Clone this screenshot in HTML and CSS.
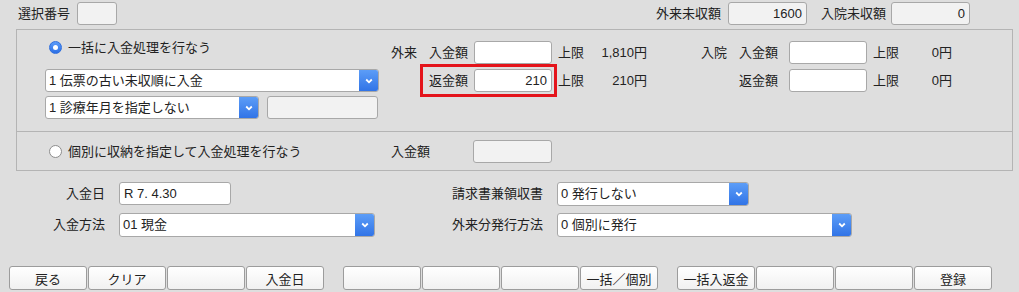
FILE: index.html
```html
<!DOCTYPE html>
<html lang="ja">
  <head>
    <meta charset="UTF-8" />
    <meta name="viewport" content="width=device-width, initial-scale=1.0" />
    <title>入金処理</title>
    <link rel="stylesheet" href="styles.css">
  </head>
  <body>
    <div class="topbar">
      <span class="label">選択番号</span>
      <span class="field readonly field-no"></span>
      <span class="label label-gairai">外来未収額</span>
      <span class="field readonly field-due num">1600</span>
      <span class="label label-nyuin">入院未収額</span>
      <span class="field readonly field-due num">0</span>
    </div>

    <div class="panel">
      <div class="bulk">
        <div class="method">
          <div class="radio"><span class="dot on"></span>一括に入金処理を行なう</div>
          <div class="select select-order">
            <span class="select-text">1 伝票の古い未収順に入金</span>
            <span class="arrow"><svg width="8" height="6" viewBox="0 0 8 6"><path d="M1.2 1.5 L4 4.3 L6.8 1.5" fill="none" stroke="#fff" stroke-width="1.8"/></svg></span>
          </div>
          <div class="method-row">
            <div class="select select-month">
              <span class="select-text">1 診療年月を指定しない</span>
              <span class="arrow"><svg width="8" height="6" viewBox="0 0 8 6"><path d="M1.2 1.5 L4 4.3 L6.8 1.5" fill="none" stroke="#fff" stroke-width="1.8"/></svg></span>
            </div>
            <span class="field readonly field-month"></span>
          </div>
        </div>

        <div class="fee">
          <span class="fee-kind">外来</span>
          <span class="fee-label">入金額</span>
          <span class="field fee-input"></span>
          <span class="fee-limit">上限</span>
          <span class="fee-value">1,810円</span>

          <span></span>
          <span class="fee-label">返金額</span>
          <span class="field fee-input num">210</span>
          <span class="fee-limit">上限</span>
          <span class="fee-value">210円</span>
          <div class="mark"></div>
        </div>

        <div class="fee fee-nyuin">
          <span class="fee-kind">入院</span>
          <span class="fee-label">入金額</span>
          <span class="field fee-input"></span>
          <span class="fee-limit">上限</span>
          <span class="fee-value">0円</span>

          <span></span>
          <span class="fee-label">返金額</span>
          <span class="field fee-input"></span>
          <span class="fee-limit">上限</span>
          <span class="fee-value">0円</span>
        </div>
      </div>

      <div class="each">
        <div class="radio radio-each"><span class="dot"></span>個別に収納を指定して入金処理を行なう</div>
        <span class="each-label">入金額</span>
        <span class="field readonly field-each"></span>
      </div>
    </div>

    <div class="form">
      <span class="form-label">入金日</span>
      <div><span class="field field-date">R 7. 4.30</span></div>
      <span class="form-label">請求書兼領収書</span>
      <div class="select select-receipt">
        <span class="select-text">0 発行しない</span>
        <span class="arrow"><svg width="8" height="6" viewBox="0 0 8 6"><path d="M1.2 1.5 L4 4.3 L6.8 1.5" fill="none" stroke="#fff" stroke-width="1.8"/></svg></span>
      </div>

      <span class="form-label">入金方法</span>
      <div class="select">
        <span class="select-text">01 現金</span>
        <span class="arrow"><svg width="8" height="6" viewBox="0 0 8 6"><path d="M1.2 1.5 L4 4.3 L6.8 1.5" fill="none" stroke="#fff" stroke-width="1.8"/></svg></span>
      </div>
      <span class="form-label">外来分発行方法</span>
      <div class="select">
        <span class="select-text">0 個別に発行</span>
        <span class="arrow"><svg width="8" height="6" viewBox="0 0 8 6"><path d="M1.2 1.5 L4 4.3 L6.8 1.5" fill="none" stroke="#fff" stroke-width="1.8"/></svg></span>
      </div>
    </div>

    <div class="buttons">
      <div class="btn-group">
        <button>戻る</button>
        <button>クリア</button>
        <button></button>
        <button>入金日</button>
      </div>
      <div class="btn-group">
        <button></button>
        <button></button>
        <button></button>
        <button>一括／個別</button>
      </div>
      <div class="btn-group">
        <button>一括入返金</button>
        <button></button>
        <button></button>
        <button>登録</button>
      </div>
    </div>
  </body>
</html>
```

FILE: styles.css
```css
/* Global */
* {
  box-sizing: border-box;
}

body {
  margin: 0;
  background: #dedede;
  color: #222;
  font-family: "Liberation Sans", "Noto Sans CJK JP", sans-serif;
  font-size: 13px;
  line-height: 23px;
}

/* Inputs */
.field {
  display: inline-block;
  height: 23px;
  line-height: 21px;
  padding: 0 4px;
  background: #fff;
  border: 1px solid #a8a8a8;
  border-radius: 3px;
  white-space: nowrap;
}

.field.readonly {
  background: #f2f2f2;
}

.num {
  text-align: right;
}

/* Top bar */
.topbar {
  display: flex;
  align-items: center;
  height: 29px;
  padding: 0 49px 2px 18px;
}

.field-no {
  width: 40px;
  margin-left: 7px;
}

.label-gairai {
  margin-left: auto;
  margin-right: 7px;
}

.label-nyuin {
  margin-left: 14px;
  margin-right: 5px;
}

.field-due {
  width: 79px;
}

/* Panel */
.panel {
  width: 997px;
  margin-left: 16px;
  border: 1px solid #b4b4b4;
}

.bulk {
  display: flex;
  height: 102px;
  padding-left: 28px;
  border-bottom: 1px solid #b4b4b4;
}

.method {
  width: 334px;
  padding-top: 6px;
}

.radio {
  display: flex;
  align-items: center;
  height: 22px;
  padding-left: 4px;
  white-space: nowrap;
}

.dot {
  width: 13px;
  height: 13px;
  margin-right: 6px;
  border: 1px solid #8d8d8d;
  border-radius: 50%;
  background: #fff;
}

.dot.on {
  position: relative;
  border-color: #2f6fde;
  background: linear-gradient(#5b9cf9, #2c6fe5);
}

.dot.on::after {
  content: "";
  position: absolute;
  top: 3px;
  left: 3px;
  width: 5px;
  height: 5px;
  border-radius: 50%;
  background: #fff;
}

/* Selects */
.select {
  display: flex;
  height: 23px;
  background: #fff;
  border: 1px solid #a8a8a8;
  border-radius: 3px;
  overflow: hidden;
}

.select-text {
  flex: 1;
  padding-left: 3px;
  line-height: 21px;
  white-space: nowrap;
}

.arrow {
  display: flex;
  align-items: center;
  justify-content: center;
  width: 20px;
  margin: -1px -1px -1px 0;
  background: linear-gradient(#5e9ff8, #2f72e6);
  border-radius: 0 3px 3px 0;
}

.select-order {
  margin-top: 11px;
}

.method-row {
  display: flex;
  margin-top: 4px;
}

.select-month {
  width: 214px;
}

.field-month {
  width: 111px;
  margin-left: 8px;
}

/* Fee groups */
.fee {
  position: relative;
  display: grid;
  grid-template-columns: 38px 45px 78px 32px 63px;
  grid-template-rows: 23px 23px;
  row-gap: 5px;
  align-self: flex-start;
  margin-left: 12px;
  margin-top: 11px;
  white-space: nowrap;
}

.fee-nyuin {
  grid-template-columns: 38px 50px 78px 31px 54px;
  margin-left: 54px;
}

.fee-limit {
  padding-left: 6px;
}

.fee-value {
  text-align: right;
}

.mark {
  position: absolute;
  grid-column: 2 / 4;
  grid-row: 2;
  top: -5px;
  bottom: -5px;
  left: -9px;
  right: -5px;
  border: 3px solid #e4141b;
}

/* Individual row */
.each {
  display: flex;
  align-items: center;
  height: 38px;
  padding-left: 28px;
}

.radio-each {
  width: 346px;
}

.each-label {
  width: 82px;
}

.field-each {
  width: 79px;
}

/* Lower form */
.form {
  display: grid;
  grid-template-columns: 105px 256px 154px 295px;
  grid-template-rows: 24px 24px;
  column-gap: 14px;
  row-gap: 7px;
  margin-top: 11px;
}

.form-label {
  text-align: right;
  line-height: 24px;
  white-space: nowrap;
}

.field-date {
  width: 112px;
}

.select-receipt {
  width: 192px;
  height: 24px;
}

.form .select {
  height: 24px;
}

.form .select-text {
  line-height: 22px;
}

/* Buttons */
.buttons {
  display: flex;
  gap: 19px;
  margin-top: 29px;
  padding-left: 9px;
}

.btn-group {
  display: flex;
  gap: 1px;
}

button {
  width: 78px;
  height: 24px;
  padding: 0;
  font-family: inherit;
  font-size: 13px;
  color: #222;
  background: linear-gradient(#ffffff, #f1f1f1);
  border: 1px solid #9c9c9c;
  border-radius: 3px;
}
```
